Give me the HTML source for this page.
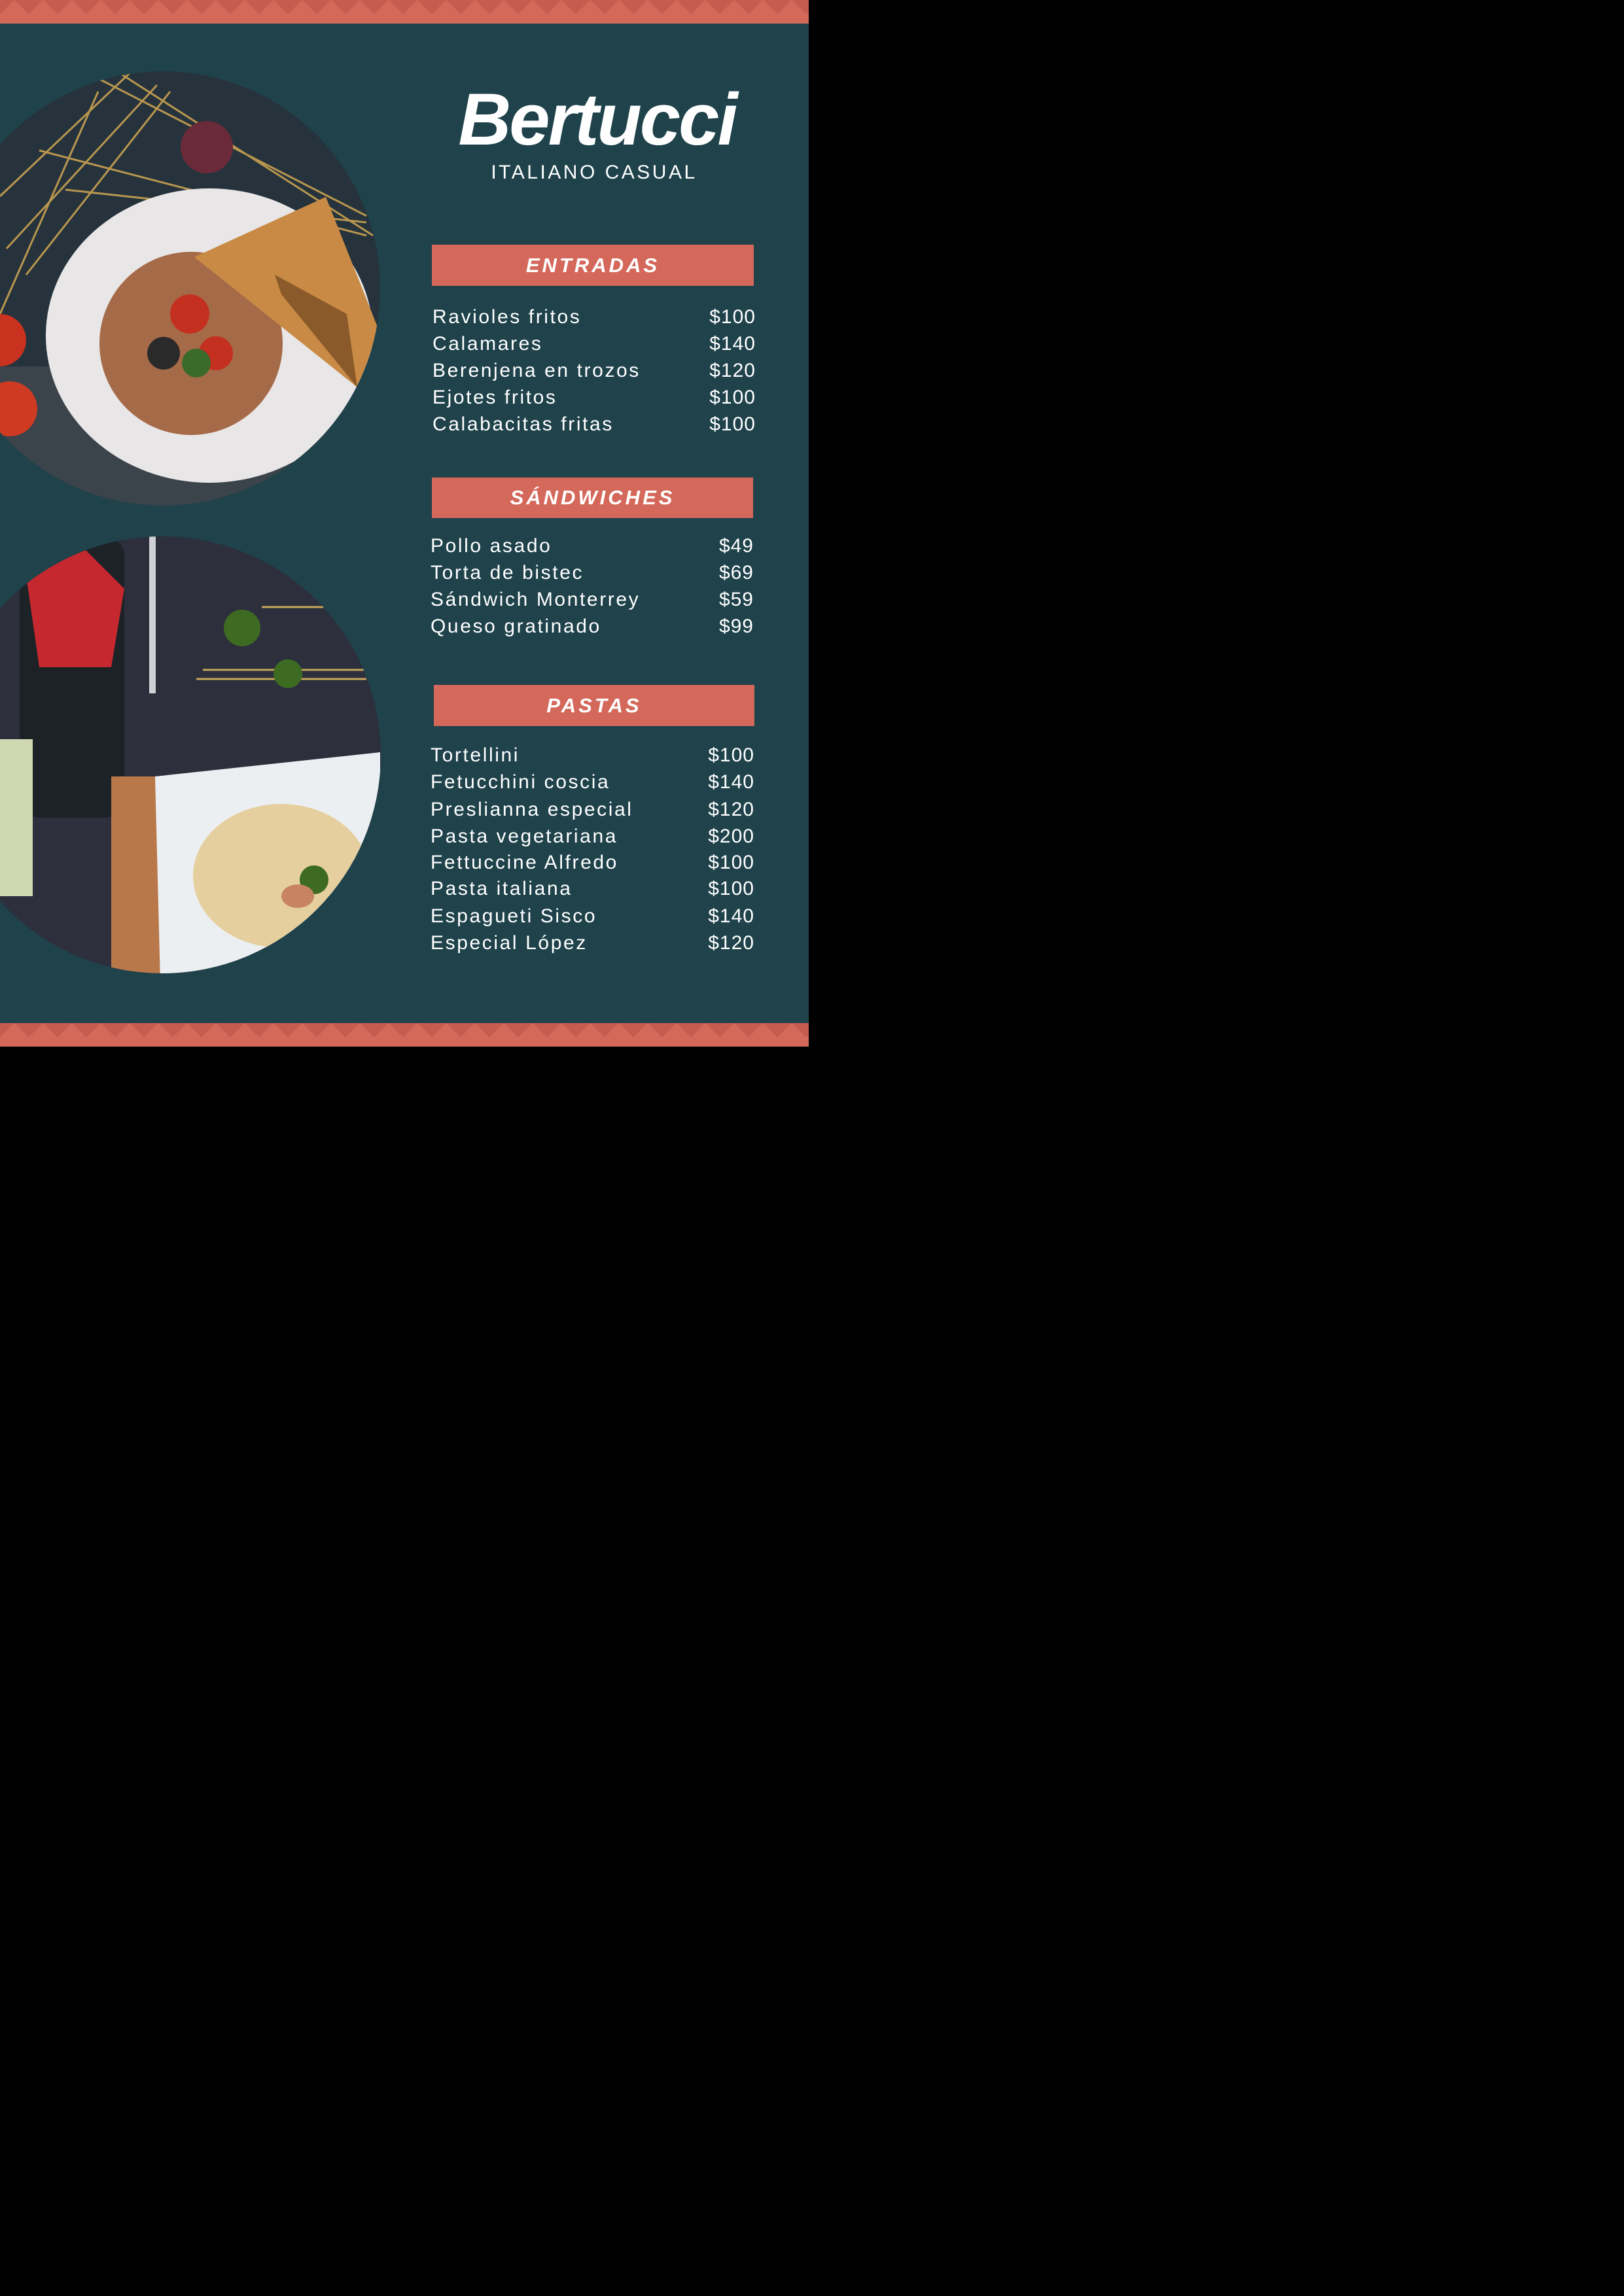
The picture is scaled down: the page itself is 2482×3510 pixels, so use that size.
<!DOCTYPE html>
<html><head><meta charset="utf-8"><style>
html,body{margin:0;padding:0;background:#000;}
body{width:2482px;height:3510px;position:relative;overflow:hidden;font-family:"Liberation Sans",sans-serif;}
#menu{position:absolute;left:0;top:0;width:1236px;height:1600px;background:#1f424b;overflow:hidden;}
.stripe{position:absolute;left:0;width:1236px;height:36px;background-color:#d4695a;
background-image:linear-gradient(135deg,#c45c50 25%,transparent 25%),linear-gradient(225deg,#c45c50 25%,transparent 25%);
background-size:44px 44px;background-position:0 0;}
.bar{position:absolute;background:#d4685a;color:#fff;font-weight:bold;font-style:italic;font-size:31px;letter-spacing:4px;text-align:center;}
.row{position:absolute;color:#fff;font-size:30px;letter-spacing:2.6px;height:40px;line-height:40px;}
.row span{position:absolute;right:0;top:0;letter-spacing:1px;}
svg{position:absolute;left:0;top:0;}
</style></head><body>
<div id="menu">
<div class="stripe" style="top:0"></div>
<div class="stripe" style="top:1564px"></div>

<svg width="1236" height="1600">
<defs>
<clipPath id="c1"><circle cx="249" cy="441" r="332"/></clipPath>
<clipPath id="c2"><circle cx="248" cy="1154" r="334"/></clipPath>
</defs>
<g clip-path="url(#c1)">
<rect x="-100" y="100" width="700" height="700" fill="#26333c"/>
<rect x="-100" y="560" width="700" height="260" fill="#3b434b"/>
<g stroke="#b8964f" stroke-width="3">
<line x1="0" y1="300" x2="200" y2="110"/><line x1="10" y1="380" x2="240" y2="130"/><line x1="40" y1="420" x2="260" y2="140"/>
<line x1="150" y1="120" x2="560" y2="330"/><line x1="180" y1="110" x2="570" y2="360"/><line x1="100" y1="290" x2="560" y2="340"/>
<line x1="0" y1="480" x2="150" y2="140"/><line x1="60" y1="230" x2="560" y2="360"/>
</g>
<circle cx="316" cy="225" r="40" fill="#6b2a3a"/>
<circle cx="0" cy="520" r="40" fill="#c8321f"/><circle cx="15" cy="625" r="42" fill="#cf3a22"/>
<ellipse cx="320" cy="513" rx="250" ry="225" fill="#e8e6e6"/>
<ellipse cx="292" cy="525" rx="140" ry="140" fill="#a56a48"/>
<circle cx="290" cy="480" r="30" fill="#c4301f"/><circle cx="250" cy="540" r="25" fill="#2a2a2a"/><circle cx="330" cy="540" r="26" fill="#c4301f"/><circle cx="300" cy="555" r="22" fill="#3b6b2a"/>
<polygon points="297,393 498,301 581,510 546,592" fill="#c98a45"/>
<polygon points="420,420 530,480 546,592 430,450" fill="#8a5a2a"/>
</g>
<g clip-path="url(#c2)">
<rect x="-100" y="800" width="700" height="720" fill="#2d2f3d"/>
<rect x="30" y="820" width="160" height="430" rx="30" fill="#1c2226"/>
<polygon points="40,880 130,840 190,900 170,1020 60,1020" fill="#c5282f"/>
<rect x="-20" y="1130" width="70" height="240" fill="#cfd8b0"/>
<rect x="228" y="820" width="10" height="240" fill="#cfd0d3"/>
<g stroke="#c8a65a" stroke-width="3"><line x1="300" y1="1038" x2="560" y2="1038"/><line x1="310" y1="1024" x2="560" y2="1024"/><line x1="400" y1="928" x2="560" y2="928"/></g>
<circle cx="370" cy="960" r="28" fill="#3d6b22"/><circle cx="440" cy="1030" r="22" fill="#3d6b22"/>
<rect x="170" y="1187" width="80" height="310" fill="#b9784a"/>
<polygon points="237,1187 581,1150 581,1500 245,1500" fill="#eceff1"/>
<ellipse cx="430" cy="1339" rx="135" ry="110" fill="#e6cf9f"/>
<circle cx="480" cy="1345" r="22" fill="#3d6b22"/><ellipse cx="455" cy="1370" rx="25" ry="18" fill="#c88462"/>
</g>
</svg>

<div style="position:absolute;left:690px;top:118px;width:445px;text-align:center;color:#fff;font-weight:bold;font-style:italic;font-size:112px;line-height:130px;letter-spacing:-3px;">Bertucci</div>
<div style="position:absolute;left:700px;top:244px;width:416px;text-align:center;color:#fff;font-size:30px;line-height:40px;letter-spacing:3.5px;">ITALIANO CASUAL</div>

<div class="bar" style="left:660px;top:374px;width:492px;height:63px;line-height:63px;">ENTRADAS</div>
<div class="row" style="left:661px;top:465px;width:494px;">Ravioles fritos<span>$100</span></div>
<div class="row" style="left:661px;top:506px;width:494px;">Calamares<span>$140</span></div>
<div class="row" style="left:661px;top:547px;width:494px;">Berenjena en trozos<span>$120</span></div>
<div class="row" style="left:661px;top:588px;width:494px;">Ejotes fritos<span>$100</span></div>
<div class="row" style="left:661px;top:629px;width:494px;">Calabacitas fritas<span>$100</span></div>

<div class="bar" style="left:660px;top:730px;width:491px;height:62px;line-height:62px;">SÁNDWICHES</div>
<div class="row" style="left:658px;top:815px;width:494px;">Pollo asado<span>$49</span></div>
<div class="row" style="left:658px;top:856px;width:494px;">Torta de bistec<span>$69</span></div>
<div class="row" style="left:658px;top:897px;width:494px;">Sándwich Monterrey<span>$59</span></div>
<div class="row" style="left:658px;top:938px;width:494px;">Queso gratinado<span>$99</span></div>

<div class="bar" style="left:663px;top:1047px;width:490px;height:63px;line-height:63px;">PASTAS</div>
<div class="row" style="left:658px;top:1135px;width:495px;">Tortellini<span>$100</span></div>
<div class="row" style="left:658px;top:1176px;width:495px;">Fetucchini coscia<span>$140</span></div>
<div class="row" style="left:658px;top:1218px;width:495px;">Preslianna especial<span>$120</span></div>
<div class="row" style="left:658px;top:1259px;width:495px;">Pasta vegetariana<span>$200</span></div>
<div class="row" style="left:658px;top:1299px;width:495px;">Fettuccine Alfredo<span>$100</span></div>
<div class="row" style="left:658px;top:1339px;width:495px;">Pasta italiana<span>$100</span></div>
<div class="row" style="left:658px;top:1381px;width:495px;">Espagueti Sisco<span>$140</span></div>
<div class="row" style="left:658px;top:1422px;width:495px;">Especial López<span>$120</span></div>
</div>
</body></html>
